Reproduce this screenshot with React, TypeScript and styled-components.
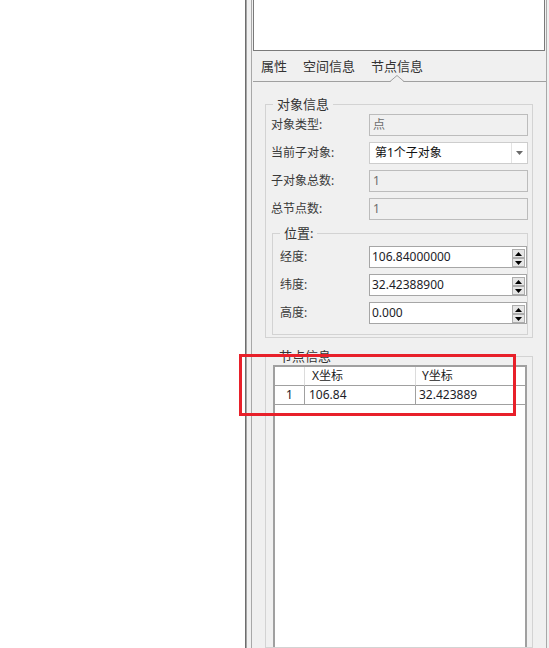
import React from "react";
import styled, { createGlobalStyle } from "styled-components";

const FONT = `"Noto Sans", "Noto Sans CJK SC", sans-serif`;

const Global = createGlobalStyle`
  html, body { margin: 0; padding: 0; background: #ffffff; }
  body { font-family: ${FONT}; }
  * { box-sizing: border-box; }
`;

const Page = styled.div`
  position: relative;
  width: 549px;
  height: 648px;
  overflow: hidden;
  display: flex;
  background: #ffffff;
  font-family: ${FONT};
`;

const LeftPane = styled.div`
  width: 245px;
  flex: none;
  background: #ffffff;
`;

const Splitter = styled.div`
  width: 2px;
  flex: none;
  border-left: 1px solid #6d6d6d;
  border-right: 1px solid #a5a5a5;
`;

const SidePanel = styled.div`
  flex: 1;
  min-width: 0;
  display: flex;
  background: #f0f0f0;
  padding: 0 2px 0 4px;
`;

const Frame = styled.div`
  flex: 1;
  min-width: 0;
  display: flex;
  flex-direction: column;
  border-left: 1px solid #a8a8a8;
  border-right: 1px solid #a8a8a8;
`;

const TextBox = styled.div`
  height: 51px;
  margin: 0 1px;
  background: #ffffff;
  border: 1px solid #7a7a7a;
  border-top: none;
`;

const TabBar = styled.div`
  position: relative;
  height: 31px;
  margin-left: 1px;
  display: flex;
  align-items: center;
  gap: 16px;
  padding-left: 8px;
  border-bottom: 1px solid #a0a0a0;
`;

const Tab = styled.div<{ $active?: boolean }>`
  position: relative;
  height: 30px;
  font-size: 13px;
  line-height: 30px;
  color: #333333;
  white-space: nowrap;
`;

const Notch = styled.svg`
  position: absolute;
  left: 50%;
  bottom: -1px;
  margin-left: -7px;
  width: 14px;
  height: 7px;
  overflow: visible;
`;

const TabPage = styled.div`
  flex: 1;
  min-height: 0;
  padding: 14px 13px 0 13px;
  display: flex;
  flex-direction: column;
`;

const Group = styled.fieldset<{ $grow?: boolean }>`
  margin: 0;
  min-width: 0;
  border: 1px solid #d3d3d3;
  padding: 1px 4px 2px 5px;
  ${(p) => (p.$grow ? "margin-top: 10px; padding: 0 5px 0 7px; height: 320px; display: flex; flex-direction: column;" : "")}
`;

const SubGroup = styled.fieldset`
  margin: 5px 0 0 1px;
  min-width: 0;
  border: 1px solid #d3d3d3;
  padding: 4px 0 10px 7px;
`;

const Legend = styled.legend<{ $inset?: number }>`
  font-size: 13px;
  line-height: 17px;
  color: #333333;
  padding: 0 4px;
  margin-left: ${(p) => p.$inset ?? 2}px;
`;

const FormGrid = styled.div<{ $labelWidth: number }>`
  display: grid;
  grid-template-columns: ${(p) => p.$labelWidth}px 1fr;
  grid-auto-rows: 22px;
  row-gap: 6px;
  align-items: center;
`;

const Label = styled.div`
  font-size: 12px;
  line-height: 22px;
  color: #3a3a3a;
  white-space: nowrap;
`;

const ReadOnlyBox = styled.div`
  height: 22px;
  background: #f0f0f0;
  border: 1px solid #bcbcbc;
  padding-left: 3px;
  font-size: 12px;
  line-height: 20px;
  color: #6d6d6d;
`;

const Combo = styled.div`
  height: 22px;
  display: flex;
  background: #ffffff;
  border: 1px solid #cdcdcd;
`;

const ComboText = styled.div`
  flex: 1;
  padding-left: 5px;
  font-size: 12px;
  line-height: 20px;
  color: #111111;
`;

const ComboButton = styled.div`
  width: 16px;
  display: flex;
  align-items: center;
  justify-content: center;
  border-left: 1px solid #e3e3e3;
`;

const Spin = styled.div`
  height: 22px;
  display: flex;
  background: #ffffff;
  border: 1px solid #a6a6a6;
`;

const SpinText = styled.div`
  flex: 1;
  padding-left: 2px;
  font-size: 12px;
  line-height: 20px;
  color: #1c1c28;
`;

const SpinButtons = styled.div`
  display: flex;
  flex-direction: column;
  padding: 2px 1px 0 0;
`;

const SpinButton = styled.div`
  width: 13px;
  height: 9px;
  display: flex;
  align-items: center;
  justify-content: center;
  background: #e6e6e6;
  border: 1px solid #adadad;
`;

const DataGrid = styled.div`
  flex: 1;
  background: #ffffff;
  border: 2px solid #a0a0a0;
  border-bottom: none;
  display: grid;
  grid-template-columns: 30px 111px 1fr;
  grid-auto-rows: 19px;
  align-content: start;
  font-size: 12px;
`;

const Cell = styled.div<{ $header?: boolean; $pad?: number; $center?: boolean; $last?: boolean }>`
  height: 19px;
  line-height: 18px;
  padding-left: ${(p) => p.$pad ?? 0}px;
  text-align: ${(p) => (p.$center ? "center" : "left")};
  color: #1c1c28;
  white-space: nowrap;
  overflow: hidden;
  border-bottom: 1px solid #a0a0a0;
  border-right: ${(p) => (p.$last ? "none" : p.$header ? "1px solid #dcdcdc" : "1px solid #a0a0a0")};
  color: ${(p) => (p.$header ? "#222222" : "#1c1c28")};
`;

const RedMark = styled.div`
  position: absolute;
  left: 239px;
  top: 354px;
  width: 277px;
  height: 62px;
  border: 3px solid #e8202a;
  pointer-events: none;
`;

const Triangle = ({ dir, color }: { dir: "up" | "down"; color: string }) => (
  <svg width="7" height="4" viewBox="0 0 7 4">
    {dir === "up" ? (
      <polygon points="0,4 7,4 3.5,0" fill={color} />
    ) : (
      <polygon points="0,0 7,0 3.5,4" fill={color} />
    )}
  </svg>
);

const SpinBox = ({ value }: { value: string }) => (
  <Spin>
    <SpinText>{value}</SpinText>
    <SpinButtons>
      <SpinButton>
        <Triangle dir="up" color="#000" />
      </SpinButton>
      <SpinButton>
        <Triangle dir="down" color="#000" />
      </SpinButton>
    </SpinButtons>
  </Spin>
);

export default function App() {
  return (
    <>
      <Global />
      <Page>
        <LeftPane />
        <Splitter />
        <SidePanel>
          <Frame>
            <TextBox />
            <TabBar>
              <Tab>属性</Tab>
              <Tab>空间信息</Tab>
              <Tab $active>
                节点信息
                <Notch viewBox="0 0 14 7">
                  <polygon points="0,7 7,1 14,7" fill="#f0f0f0" />
                  <polyline points="0,6.5 7,0.5 14,6.5" fill="none" stroke="#a0a0a0" strokeWidth="1" />
                </Notch>
              </Tab>
            </TabBar>
            <TabPage>
              <Group>
                <Legend>对象信息</Legend>
                <FormGrid $labelWidth={98}>
                  <Label>对象类型:</Label>
                  <ReadOnlyBox>点</ReadOnlyBox>
                  <Label>当前子对象:</Label>
                  <Combo>
                    <ComboText>第1个子对象</ComboText>
                    <ComboButton>
                      <svg width="7" height="4" viewBox="0 0 7 4">
                        <polygon points="0,0 7,0 3.5,4" fill="#6a6a6a" />
                      </svg>
                    </ComboButton>
                  </Combo>
                  <Label>子对象总数:</Label>
                  <ReadOnlyBox>1</ReadOnlyBox>
                  <Label>总节点数:</Label>
                  <ReadOnlyBox>1</ReadOnlyBox>
                </FormGrid>
                <SubGroup>
                  <Legend $inset={0}>位置:</Legend>
                  <FormGrid $labelWidth={89}>
                    <Label>经度:</Label>
                    <SpinBox value="106.84000000" />
                    <Label>纬度:</Label>
                    <SpinBox value="32.42388900" />
                    <Label>高度:</Label>
                    <SpinBox value="0.000" />
                  </FormGrid>
                </SubGroup>
              </Group>
              <Group $grow>
                <Legend>节点信息</Legend>
                <DataGrid>
                  <Cell $header />
                  <Cell $header $pad={7}>X坐标</Cell>
                  <Cell $header $pad={6} $last>Y坐标</Cell>
                  <Cell $center>1</Cell>
                  <Cell $pad={4}>106.84</Cell>
                  <Cell $pad={3} $last>32.423889</Cell>
                </DataGrid>
              </Group>
            </TabPage>
          </Frame>
        </SidePanel>
        <RedMark />
      </Page>
    </>
  );
}
